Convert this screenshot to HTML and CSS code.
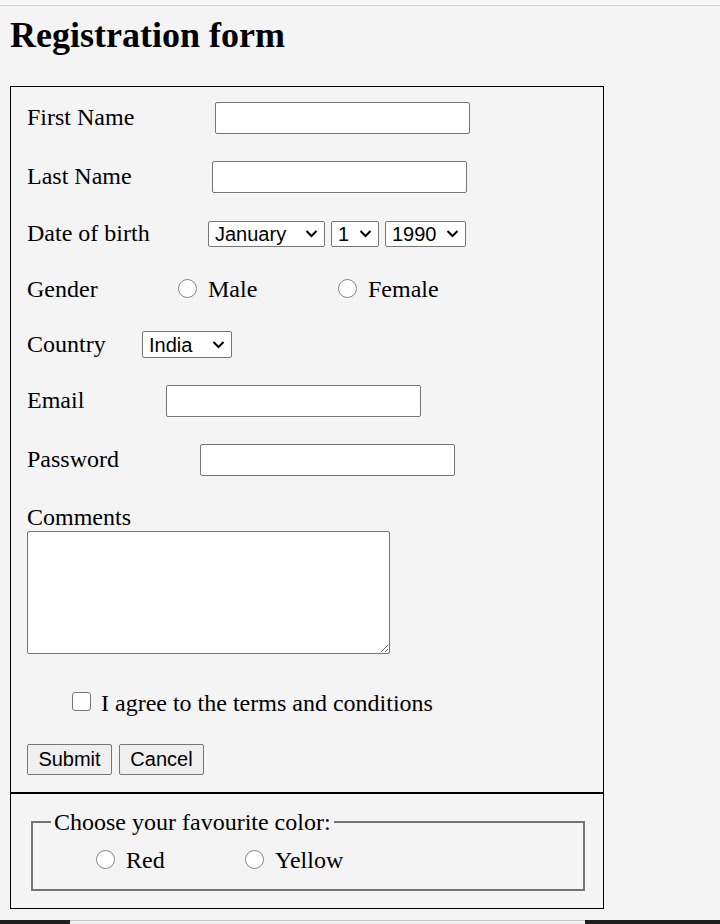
FILE: index.html
```html
<!DOCTYPE html>
<html lang="en">
<head>
<meta charset="utf-8">
<title>Registration form</title>
<link rel="stylesheet" href="styles.css">
</head>
<body>
<div class="topstrip"></div>
<main class="page">
  <h1 class="title">Registration form</h1>
  <form class="form-box">
    <div class="row r1"><span class="lbl lbl-first">First Name</span><input class="text" type="text"></div>
    <div class="row r2"><span class="lbl lbl-last">Last Name</span><input class="text" type="text"></div>
    <div class="row r3"><span class="lbl lbl-dob">Date of birth</span>
      <span class="dob">
        <span class="selwrap"><select class="sel sel-month"><option>January</option></select><svg class="chev" width="13" height="9" viewBox="0 0 13 9"><path d="M1.5 2 L6.5 7 L11.5 2" fill="none" stroke="#000" stroke-width="2"/></svg></span>
        <span class="selwrap"><select class="sel sel-day"><option>1</option></select><svg class="chev" width="13" height="9" viewBox="0 0 13 9"><path d="M1.5 2 L6.5 7 L11.5 2" fill="none" stroke="#000" stroke-width="2"/></svg></span>
        <span class="selwrap"><select class="sel sel-year"><option>1990</option></select><svg class="chev" width="13" height="9" viewBox="0 0 13 9"><path d="M1.5 2 L6.5 7 L11.5 2" fill="none" stroke="#000" stroke-width="2"/></svg></span>
      </span>
    </div>
    <div class="row r4"><span class="lbl lbl-gender">Gender</span>
      <label class="opt opt-gender"><input class="radio" type="radio" name="g">Male</label>
      <label class="opt"><input class="radio" type="radio" name="g">Female</label>
    </div>
    <div class="row r5"><span class="lbl lbl-country">Country</span><span class="selwrap"><select class="sel sel-country"><option>India</option></select><svg class="chev" width="13" height="9" viewBox="0 0 13 9"><path d="M1.5 2 L6.5 7 L11.5 2" fill="none" stroke="#000" stroke-width="2"/></svg></span></div>
    <div class="row r6"><span class="lbl lbl-email">Email</span><input class="text" type="email"></div>
    <div class="row r7"><span class="lbl lbl-pass">Password</span><input class="text" type="password"></div>
    <div class="comments">
      <div class="lbl">Comments</div>
      <textarea class="area"></textarea>
    </div>
    <label class="agree"><input class="check" type="checkbox">I agree to the terms and conditions</label>
    <div class="buttons">
      <button class="btn" type="button">Submit</button>
      <button class="btn" type="button">Cancel</button>
    </div>
  </form>
  <div class="color-box">
    <fieldset class="colors">
      <legend class="legend">Choose your favourite color:</legend>
      <div class="color-row">
        <label class="opt opt-color"><input class="radio" type="radio" name="c">Red</label>
        <label class="opt"><input class="radio" type="radio" name="c">Yellow</label>
      </div>
    </fieldset>
  </div>
</main>
<div class="taskbar"><div class="taskbar-seg"></div></div>
</body>
</html>
```

FILE: styles.css
```css
html, body {
  margin: 0;
  padding: 0;
  background: #f4f4f4;
}
body {
  font-family: "Liberation Serif", "Times New Roman", serif;
  font-size: 24px;
  line-height: 28px;
  color: #000;
}
.topstrip {
  height: 5px;
  background: #f7f7f7;
  border-bottom: 1px solid #d1d1d1;
}
.page {
  padding: 0 10px;
}
.title {
  margin: 8px 0 30px;
  font-size: 36px;
  line-height: 42px;
  font-weight: bold;
}
.form-box {
  width: 594px;
  box-sizing: border-box;
  border: 1px solid #000;
  padding: 15px 16px 17px;
  margin: 0;
}
.row {
  display: flex;
  align-items: baseline;
}
.r1 { height: 59px; }
.r2 { height: 57.5px; }
.r3 { height: 56px; }
.r4 { height: 55px; }
.r5 { height: 55.5px; }
.r6 { height: 59px; }
.r7 { height: 58.5px; }
.lbl { flex: none; }
.lbl-first { width: 188px; }
.lbl-last { width: 185px; }
.lbl-dob { width: 181px; }
.lbl-gender { width: 151px; }
.lbl-country { width: 115px; }
.lbl-email { width: 139px; }
.lbl-pass { width: 173px; }

.text {
  width: 255px;
  height: 32px;
  box-sizing: border-box;
  border: 1px solid #767676;
  border-radius: 2px;
  background: #fff;
  padding: 1px 3px;
  margin: 0;
  font-family: "Liberation Sans", Arial, sans-serif;
  font-size: 20px;
}
.dob {
  display: flex;
  align-items: baseline;
  gap: 6px;
}
.selwrap {
  position: relative;
  display: inline-block;
  flex: none;
}
.sel {
  -webkit-appearance: none;
  appearance: none;
  height: 26px;
  box-sizing: border-box;
  margin: 0;
  border: 1px solid #767676;
  border-radius: 2px;
  background-color: #fff;
  color: #000;
  font-family: "Liberation Sans", Arial, sans-serif;
  font-size: 20px;
  line-height: 24px;
  padding: 0 0 0 6px;
  vertical-align: baseline;
}
.chev {
  position: absolute;
  right: 7px;
  top: 50%;
  margin-top: -4px;
  pointer-events: none;
}
.sel-month { width: 117px; }
.sel-day { width: 48px; }
.sel-year { width: 81px; }
.sel-country { width: 90px; height: 27px; }

.opt { display: block; flex: none; }
.opt-gender { width: 160px; }
.radio {
  -webkit-appearance: none;
  appearance: none;
  width: 19px;
  height: 19px;
  box-sizing: border-box;
  margin: 0 11px 0 0;
  border: 1px solid #858585;
  border-radius: 50%;
  background: #fff;
  vertical-align: -1px;
}
.comments .lbl { height: 28px; }
.area {
  display: block;
  width: 363px;
  height: 123px;
  box-sizing: border-box;
  margin: 0;
  border: 1px solid #767676;
  border-radius: 2px;
  background: #fff;
}
.agree {
  display: block;
  margin-top: 35px;
  padding-left: 45px;
  height: 28px;
}
.check {
  -webkit-appearance: none;
  appearance: none;
  width: 19px;
  height: 19px;
  box-sizing: border-box;
  margin: 0 10px 0 0;
  border: 1px solid #767676;
  border-radius: 3px;
  background: #fff;
  vertical-align: 0;
}
.buttons {
  display: flex;
  gap: 7px;
  margin-top: 27px;
}
.btn {
  width: 85px;
  height: 31px;
  box-sizing: border-box;
  margin: 0;
  padding: 0;
  border: 1px solid #767676;
  border-radius: 2px;
  background: #efefef;
  color: #000;
  font-family: "Liberation Sans", Arial, sans-serif;
  font-size: 20px;
}
.color-box {
  width: 594px;
  box-sizing: border-box;
  border: 1px solid #000;
  padding: 14px 18px 17px 20px;
}
.colors {
  margin: 0;
  padding: 10px 18px 15px;
  border: 2px solid #747474;
  min-width: 0;
}
.legend {
  padding: 0 3px;
  line-height: 28px;
}
.color-row {
  display: flex;
  align-items: baseline;
  padding-left: 45px;
  height: 28px;
}
.opt-color { width: 149px; }

.taskbar {
  position: fixed;
  left: 0;
  right: 0;
  bottom: 0;
  height: 4px;
  background: #1f1f1f;
}
.taskbar-seg {
  margin-left: 70px;
  width: 515px;
  height: 4px;
  box-sizing: border-box;
  background: #f0f0f0;
  border-top: 1px solid #c4c4c4;
}
```
